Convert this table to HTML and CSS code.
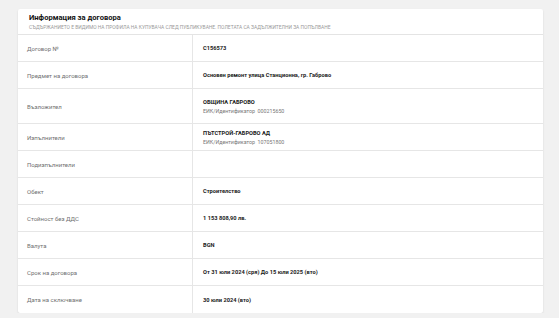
FILE: index.html
```html
<!DOCTYPE html>
<html lang="bg">
<head>
<meta charset="utf-8">
<link rel="stylesheet" href="styles.css">
</head>
<body>
<div class="card">
  <div class="card-head">
    <div class="title">Информация за договора</div>
    <div class="subtitle">Съдържанието е видимо на профила на купувача след публикуване. Полетата са задължителни за попълване</div>
  </div>
  <div class="table">
    <div class="row"><div class="lbl">Договор №</div><div class="val">C156573</div></div>
    <div class="row"><div class="lbl">Предмет на договора</div><div class="val">Основен ремонт улица Станционна, гр. Габрово</div></div>
    <div class="row tall"><div class="lbl">Възложител</div><div class="val"><div>ОБЩИНА ГАБРОВО</div><div class="eik">ЕИК/Идентификатор&nbsp; 000215650</div></div></div>
    <div class="row"><div class="lbl">Изпълнители</div><div class="val"><div>ПЪТСТРОЙ-ГАБРОВО АД</div><div class="eik">ЕИК/Идентификатор&nbsp; 107051800</div></div></div>
    <div class="row"><div class="lbl">Подизпълнители</div><div class="val"></div></div>
    <div class="row"><div class="lbl">Обект</div><div class="val">Строителство</div></div>
    <div class="row"><div class="lbl">Стойност без ДДС</div><div class="val">1 153 808,90 лв.</div></div>
    <div class="row"><div class="lbl">Валута</div><div class="val">BGN</div></div>
    <div class="row"><div class="lbl">Срок на договора</div><div class="val">От 31 юли 2024 (сря) До 15 юли 2025 (вто)</div></div>
    <div class="row"><div class="lbl">Дата на сключване</div><div class="val">30 юли 2024 (вто)</div></div>
  </div>
</div>
</body>
</html>
```
FILE: styles.css
```css
html, body {
  margin: 0;
  padding: 0;
  background: #f1f1f1;
  font-family: Roboto, "Noto Sans", sans-serif;
  color: #222;
}
body {
  padding: 9px 16px 0 18px;
}
.card {
  width: 525px;
  background: #fff;
  box-shadow: 0 1px 2px rgba(0,0,0,0.12);
  border-radius: 2px;
}
.card-head {
  height: 26px;
  padding: 3px 0 0 11px;
  box-sizing: border-box;
  border-bottom: 1px solid #e4e4e4;
}
.title {
  font-size: 7.6px;
  font-weight: 700;
  line-height: 11px;
  color: #111;
}
.subtitle {
  font-size: 4.9px;
  line-height: 7px;
  text-transform: uppercase;
  color: #999;
  white-space: nowrap;
  margin-top: 1px;
}
.row {
  display: grid;
  grid-template-columns: 175px 1fr;
  height: 27px;
  border-bottom: 1px solid #e6e6e6;
  box-sizing: border-box;
}
.row:last-child {
  border-bottom: none;
}
.row.tall {
  height: 35px;
}
.lbl {
  display: flex;
  align-items: center;
  padding-left: 9px;
  font-size: 6px;
  color: #707070;
  border-right: 1px solid #e6e6e6;
}
.val {
  display: flex;
  flex-direction: column;
  justify-content: center;
  padding-left: 10px;
  font-size: 5.7px;
  font-weight: 700;
  color: #1a1a1a;
}
.eik {
  font-weight: 400;
  color: #777;
  font-size: 5.3px;
  margin-top: 3px;
}
```
